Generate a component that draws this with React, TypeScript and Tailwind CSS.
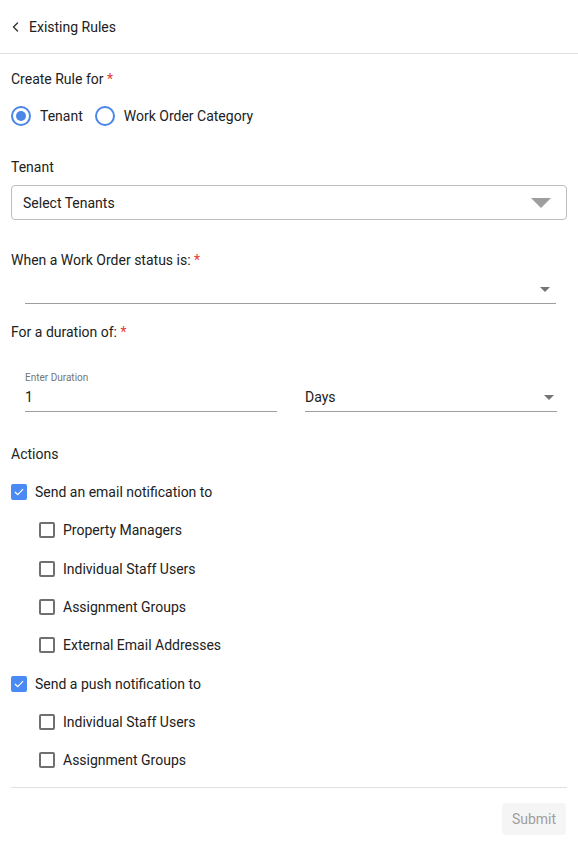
import React from "react";

function Required() {
  return <span className="text-[#e53935]"> *</span>;
}

function Radio({ checked, label }: { checked?: boolean; label: string }) {
  return (
    <label className="flex items-center gap-[9px]">
      <span className="flex h-[20px] w-[20px] items-center justify-center rounded-full border-2 border-[#4a86e8]">
        {checked && <span className="h-[10px] w-[10px] rounded-full bg-[#4a86e8]" />}
      </span>
      <span>{label}</span>
    </label>
  );
}

function Checkbox({ checked, label, nested }: { checked?: boolean; label: string; nested?: boolean }) {
  return (
    <div className={`flex h-[38.3px] items-center gap-[8px] ${nested ? "pl-[28px]" : ""}`}>
      {checked ? (
        <span className="flex h-[16px] w-[16px] items-center justify-center rounded-[2px] bg-[#4a8af4]">
          <svg width="12" height="12" viewBox="0 0 12 12" fill="none">
            <path d="M2.2 6.2 4.8 8.7 9.8 3.4" stroke="white" strokeWidth="1.2" strokeLinecap="round" strokeLinejoin="round" />
          </svg>
        </span>
      ) : (
        <span className="h-[16px] w-[16px] rounded-[2px] border-2 border-[#707070]" />
      )}
      <span>{label}</span>
    </div>
  );
}

function Caret({ big }: { big?: boolean }) {
  return big ? (
    <svg width="20" height="10" viewBox="0 0 20 10">
      <path d="M0 0h20L10 10z" fill="#9e9e9e" />
    </svg>
  ) : (
    <svg width="10" height="5" viewBox="0 0 10 5">
      <path d="M0 0h10L5 5z" fill="#757575" />
    </svg>
  );
}

export default function App() {
  const emailTargets = ["Property Managers", "Individual Staff Users", "Assignment Groups", "External Email Addresses"];
  const pushTargets = ["Individual Staff Users", "Assignment Groups"];

  return (
    <div className="min-h-[842px] w-[578px] bg-white text-[14px] leading-[20px] text-[#212121] [font-family:Roboto,'Liberation_Sans',sans-serif]">
      {/* Header */}
      <div className="flex h-[54px] items-center gap-[10px] border-b border-[#e0e0e0] pl-[12px]">
        <svg width="7" height="10" viewBox="0 0 7 10" fill="none">
          <path d="M5.5 1 1.5 5l4 4" stroke="#333" strokeWidth="1.4" strokeLinecap="round" strokeLinejoin="round" />
        </svg>
        <span>Existing Rules</span>
      </div>

      <div className="px-[11px]">
        <div className="mt-[15px]">
          Create Rule for<Required />
        </div>

        <div className="mt-[17px] flex items-center gap-[12px]">
          <Radio checked label="Tenant" />
          <Radio label="Work Order Category" />
        </div>

        <div className="mt-[31px]">Tenant</div>
        <div className="mt-[8px] flex h-[35px] items-center justify-between rounded-[4px] border border-[#bdbdbd] pl-[11px] pr-[15px]">
          <span>Select Tenants</span>
          <Caret big />
        </div>

        <div className="mt-[30px]">
          When a Work Order status is:<Required />
        </div>
        <div className="ml-[14px] mr-[11px] mt-[3px] flex h-[31px] items-center justify-end border-b border-[#9e9e9e] pr-[6px] pt-[2px]">
          <Caret />
        </div>

        <div className="mt-[18px]">
          For a duration of:<Required />
        </div>
        <div className="ml-[14px] mr-[10px] mt-[30px] grid grid-cols-2 gap-[28px]">
          <div className="border-b border-[#9e9e9e]">
            <div className="text-[10px] leading-[12px] text-[#757575]">Enter Duration</div>
            <div className="pb-[4px] pt-[3px]">1</div>
          </div>
          <div className="flex items-end border-b border-[#9e9e9e]">
            <div className="flex w-full items-center justify-between pb-[4px] pr-[3px] pt-[3px]">
              <span>Days</span>
              <Caret />
            </div>
          </div>
        </div>

        <div className="mt-[32px]">Actions</div>
        <div className="mt-[9px]">
          <Checkbox checked label="Send an email notification to" />
          {emailTargets.map((t) => (
            <Checkbox key={"e" + t} nested label={t} />
          ))}
          <Checkbox checked label="Send a push notification to" />
          {pushTargets.map((t) => (
            <Checkbox key={"p" + t} nested label={t} />
          ))}
        </div>

        <div className="mt-[8px] border-t border-[#e0e0e0]" />
        <div className="mt-[15px] flex justify-end pr-[1px]">
          <button className="h-[32px] w-[64px] rounded-[4px] bg-[#f5f5f5] text-[#9e9e9e]">Submit</button>
        </div>
      </div>
    </div>
  );
}
